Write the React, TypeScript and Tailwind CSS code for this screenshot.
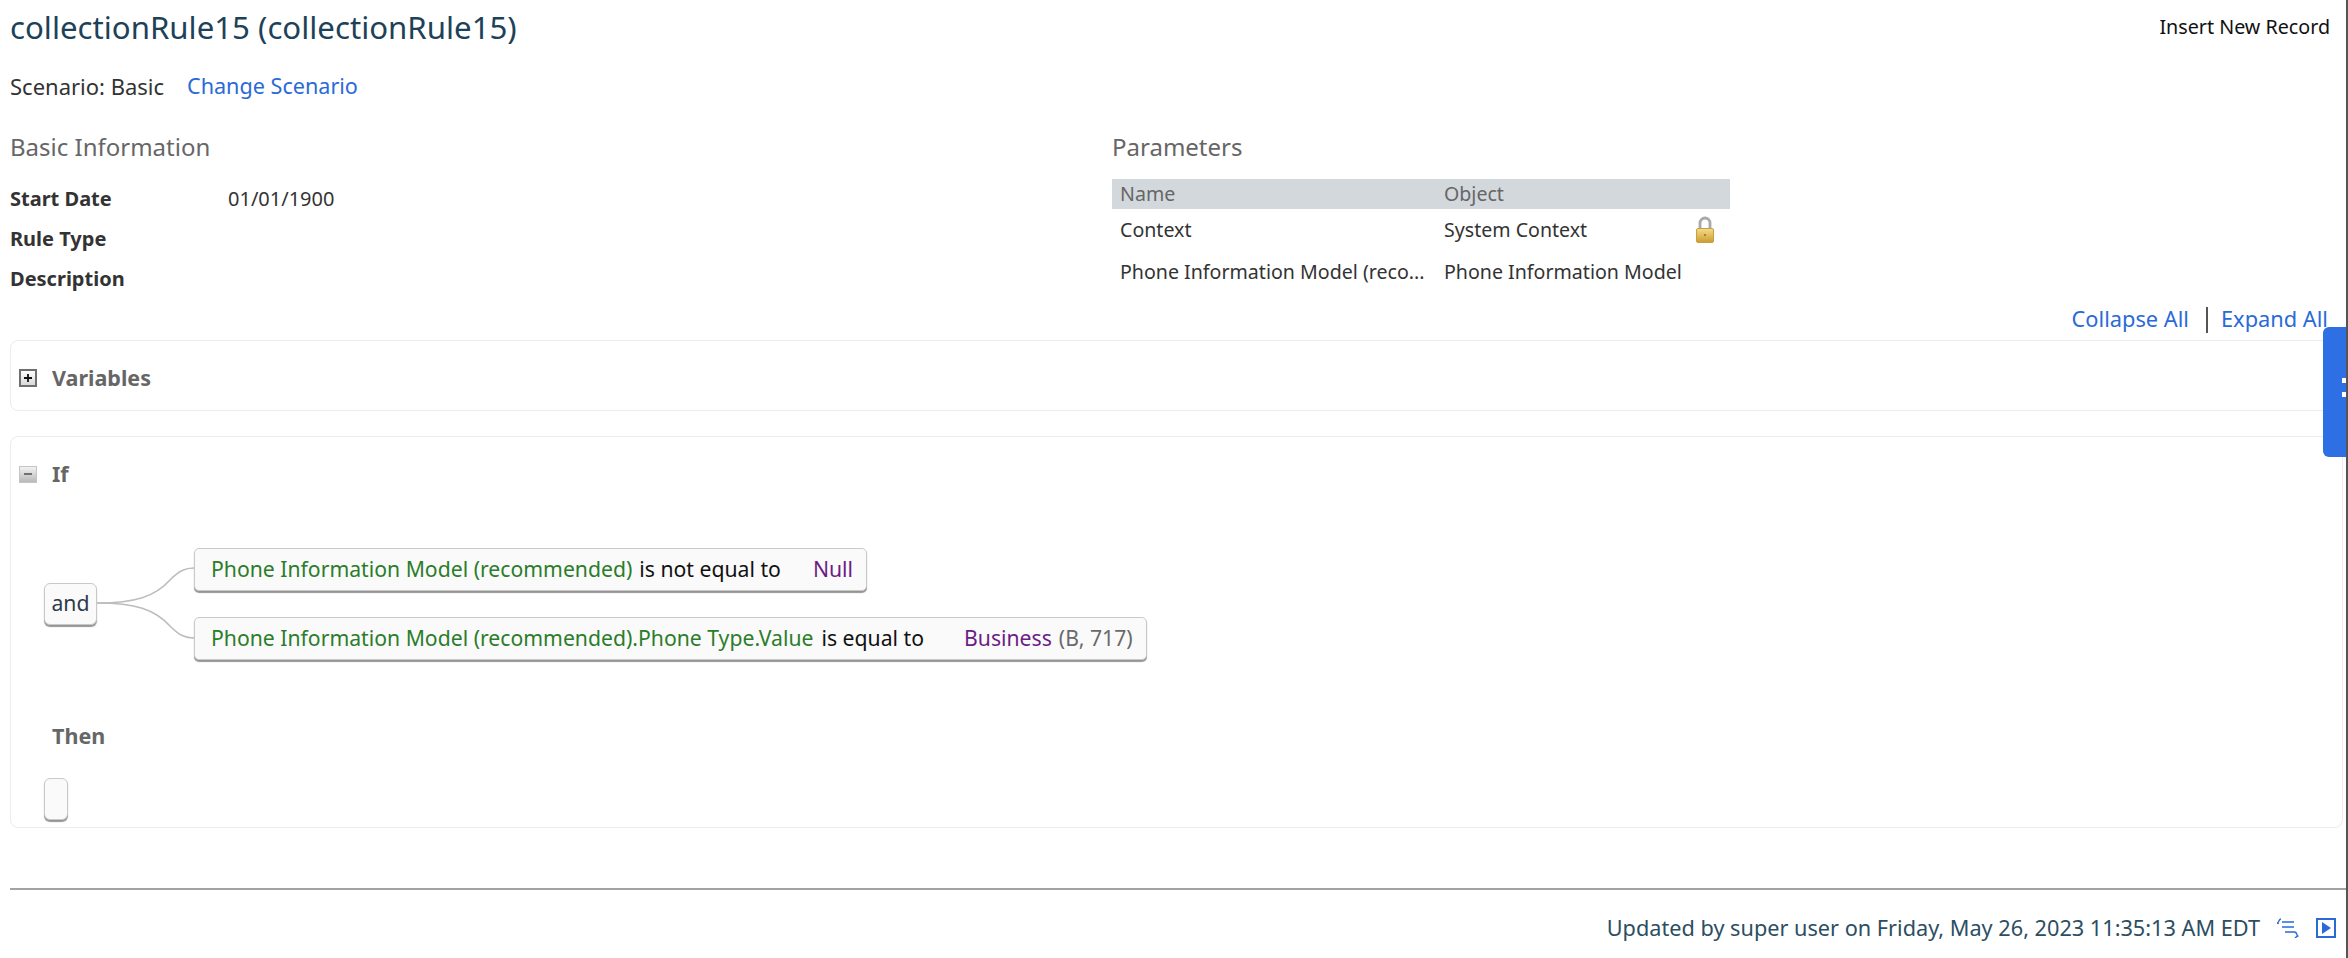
import React from 'react';

const font = "font-['Noto_Sans',sans-serif]";

function PlusIcon() {
  return (
    <div className="w-[18px] h-[18px] border-2 border-[#6f6f6f] bg-gradient-to-b from-white to-[#d8d8d8] flex items-center justify-center shrink-0">
      <svg width="10" height="10" viewBox="0 0 10 10">
        <path d="M5 1v8M1 5h8" stroke="#111" strokeWidth="1.8" />
      </svg>
    </div>
  );
}

function MinusIcon() {
  return (
    <div className="w-[18px] h-[17px] border border-[#c4c4c4] bg-gradient-to-b from-[#f2f2f2] to-[#b9b9b9] flex items-center justify-center shrink-0">
      <svg width="10" height="10" viewBox="0 0 10 10">
        <path d="M1 5h8" stroke="#666" strokeWidth="1.8" />
      </svg>
    </div>
  );
}

function LockIcon() {
  return (
    <svg className="ml-[1px]" width="18" height="27" viewBox="0 0 18 27">
      <defs>
        <linearGradient id="gold" x1="0" y1="0" x2="0" y2="1">
          <stop offset="0" stopColor="#f5dc8c" />
          <stop offset="1" stopColor="#cb9c30" />
        </linearGradient>
      </defs>
      <path d="M4 14V7a5 5 0 0 1 10 0V14" fill="none" stroke="#a9a9a9" strokeWidth="2.8" />
      <rect x="0.5" y="12.5" width="17" height="14" rx="1.5" fill="url(#gold)" stroke="#c9a040" />
      <circle cx="9" cy="19" r="1.1" fill="#9a7420" />
    </svg>
  );
}

function Node({ children }: { children: React.ReactNode }) {
  return (
    <div className="h-[43px] w-fit flex items-center pl-[16px] pr-[13px] bg-[#fafafa] border border-[#c9c9c9] rounded-[5px] shadow-[0_2px_1px_rgba(0,0,0,0.42)] text-[21.2px] whitespace-nowrap">
      {children}
    </div>
  );
}

function InfoRow({ label, value }: { label: string; value?: string }) {
  return (
    <div className="h-[40px] flex items-center">
      <span className="w-[218px] text-[20px] font-bold text-[#333]">{label}</span>
      <span className="text-[20px] text-[#333]">{value}</span>
    </div>
  );
}

export default function App() {
  return (
    <div className={`${font} relative h-[958px] w-[2348px] overflow-hidden bg-white border-r-2 border-[#555]`}>
      <div className="h-[54px] flex items-center justify-between pl-[10px] pr-[16px]">
        <h1 className="text-[31.2px] text-[#1d4258]">collectionRule15 (collectionRule15)</h1>
        <button className="text-[19.7px] text-[#111]">Insert New Record</button>
      </div>

      <div className="mt-[12px] h-[40px] flex items-center pl-[10px] text-[22px]">
        <span className="text-[#333] w-[177px]">Scenario: Basic</span>
        <a className="text-[21.6px] text-[#2a6ad8]">Change Scenario</a>
      </div>

      <div className="mt-[21px] flex pl-[10px]">
        <div className="w-[1102px]">
          <h2 className="h-[40px] flex items-center text-[24px] text-[#666]">Basic Information</h2>
          <div className="mt-[12px]">
            <InfoRow label="Start Date" value="01/01/1900" />
            <InfoRow label="Rule Type" />
            <InfoRow label="Description" />
          </div>
        </div>
        <div className="w-[618px]">
          <h2 className="h-[40px] flex items-center text-[24px] text-[#666]">Parameters</h2>
          <div className="mt-[12px] h-[30px] flex items-center bg-[#d3d8dd] text-[19.6px] text-[#666]">
            <span className="w-[332px] pl-[8px]">Name</span>
            <span>Object</span>
          </div>
          <div className="h-[41px] flex items-center text-[19.6px] text-[#333]">
            <span className="w-[332px] pl-[8px]">Context</span>
            <span className="w-[251px]">System Context</span>
            <LockIcon />
          </div>
          <div className="h-[43px] flex items-center text-[19.6px] text-[#333]">
            <span className="w-[332px] pl-[8px] whitespace-nowrap">Phone Information Model (reco...</span>
            <span>Phone Information Model</span>
          </div>
        </div>
      </div>

      <div className="h-[41px] flex items-center justify-end pr-[18px] text-[21.8px] text-[#2a6ad8]">
        <a>Collapse All</a>
        <span className="ml-[17px] mr-[13px] w-[2px] h-[26px] bg-[#555]" />
        <a>Expand All</a>
      </div>

      <div className="ml-[10px] mr-[3px] h-[71px] border border-[#ececec] rounded-[8px] pt-[5px] pl-[8px] flex items-center gap-[15px]">
        <PlusIcon />
        <span className="text-[21.5px] font-bold text-[#666]">Variables</span>
      </div>

      <div className="mt-[25px] ml-[10px] mr-[3px] h-[392px] border border-[#ececec] rounded-[8px] pl-[8px] pt-[25px]">
        <div className="h-[24px] flex items-center gap-[15px]">
          <MinusIcon />
          <span className="text-[21.5px] font-bold text-[#666]">If</span>
        </div>

        <div className="mt-[61px] ml-[25px] flex items-center">
          <div className="w-[53px] h-[42px] pb-[2px] flex items-center justify-center bg-[#fafafa] border border-[#c9c9c9] rounded-[6px] shadow-[0_2px_1px_rgba(0,0,0,0.42)] text-[21.2px] text-[#2d3a4a]">and</div>
          <svg width="97" height="113" viewBox="0 0 97 113" fill="none" stroke="#bdbdbd" strokeWidth="1.6">
            <path d="M0 56C38 56 58 50 74 32C82 24 88 21 97 21" />
            <path d="M0 56C38 56 58 62 74 80C82 88 88 91 97 91" />
          </svg>
          <div className="flex flex-col gap-[26px]">
            <Node>
              <span className="text-[#2b7d2b]">Phone Information Model (recommended)</span>
              <span className="ml-[7px] text-[#111]">is not equal to</span>
              <span className="ml-[32px] text-[#6c1d85]">Null</span>
            </Node>
            <Node>
              <span className="text-[#2b7d2b]">Phone Information Model (recommended).Phone Type.Value</span>
              <span className="ml-[8px] text-[#111]">is equal to</span>
              <span className="ml-[40px] text-[#6c1d85]">Business</span>
              <span className="ml-[7px] text-[#6a6a6a]">(B, 717)</span>
            </Node>
          </div>
        </div>

        <div className="mt-[64px] ml-[33px] h-[24px] flex items-center text-[21.5px] font-bold text-[#666]">Then</div>
        <div className="mt-[30px] ml-[25px] w-[24px] h-[42px] bg-[#fafafa] border border-[#c9c9c9] rounded-[6px] shadow-[0_2px_1px_rgba(0,0,0,0.42)]" />
      </div>

      <div className="mt-[60px] ml-[10px] h-[2px] bg-[#a3a3a3]" />

      <div className="mt-[19px] h-[38px] flex items-center justify-end pr-[10px]">
        <span className="text-[21.7px] text-[#2c4e62]">Updated by super user on Friday, May 26, 2023 11:35:13 AM EDT</span>
        <svg className="ml-[16px]" width="24" height="20" viewBox="0 0 24 20" fill="none" stroke="#2a6ad8" strokeWidth="1.4">
          <path d="M5 1C3 1 3 3 2.5 4C2 5 1 5 1 5C1 5 2 5 2.5 6" />
          <path d="M6 4h12M6 9h12M9 14h10" />
          <path d="M19 14C21 15 20.5 16 21 17C21.5 18 22.5 18 22.5 18C21 18 20 19 19 20" />
        </svg>
        <div className="ml-[16px] w-[20px] h-[20px] border-2 border-[#2a6ad8] flex items-center justify-center">
          <svg width="10" height="12" viewBox="0 0 10 12"><path d="M1 0l9 6-9 6z" fill="#2a6ad8" /></svg>
        </div>
      </div>

      <div className="absolute left-[2323px] top-[327px] w-[23px] h-[130px] bg-[#2f6fe4] rounded-l-[6px]">
        <div className="absolute right-0 top-[51px] w-[4px] h-[5px] bg-white" />
        <div className="absolute right-0 top-[65px] w-[4px] h-[5px] bg-white" />
      </div>
    </div>
  );
}
